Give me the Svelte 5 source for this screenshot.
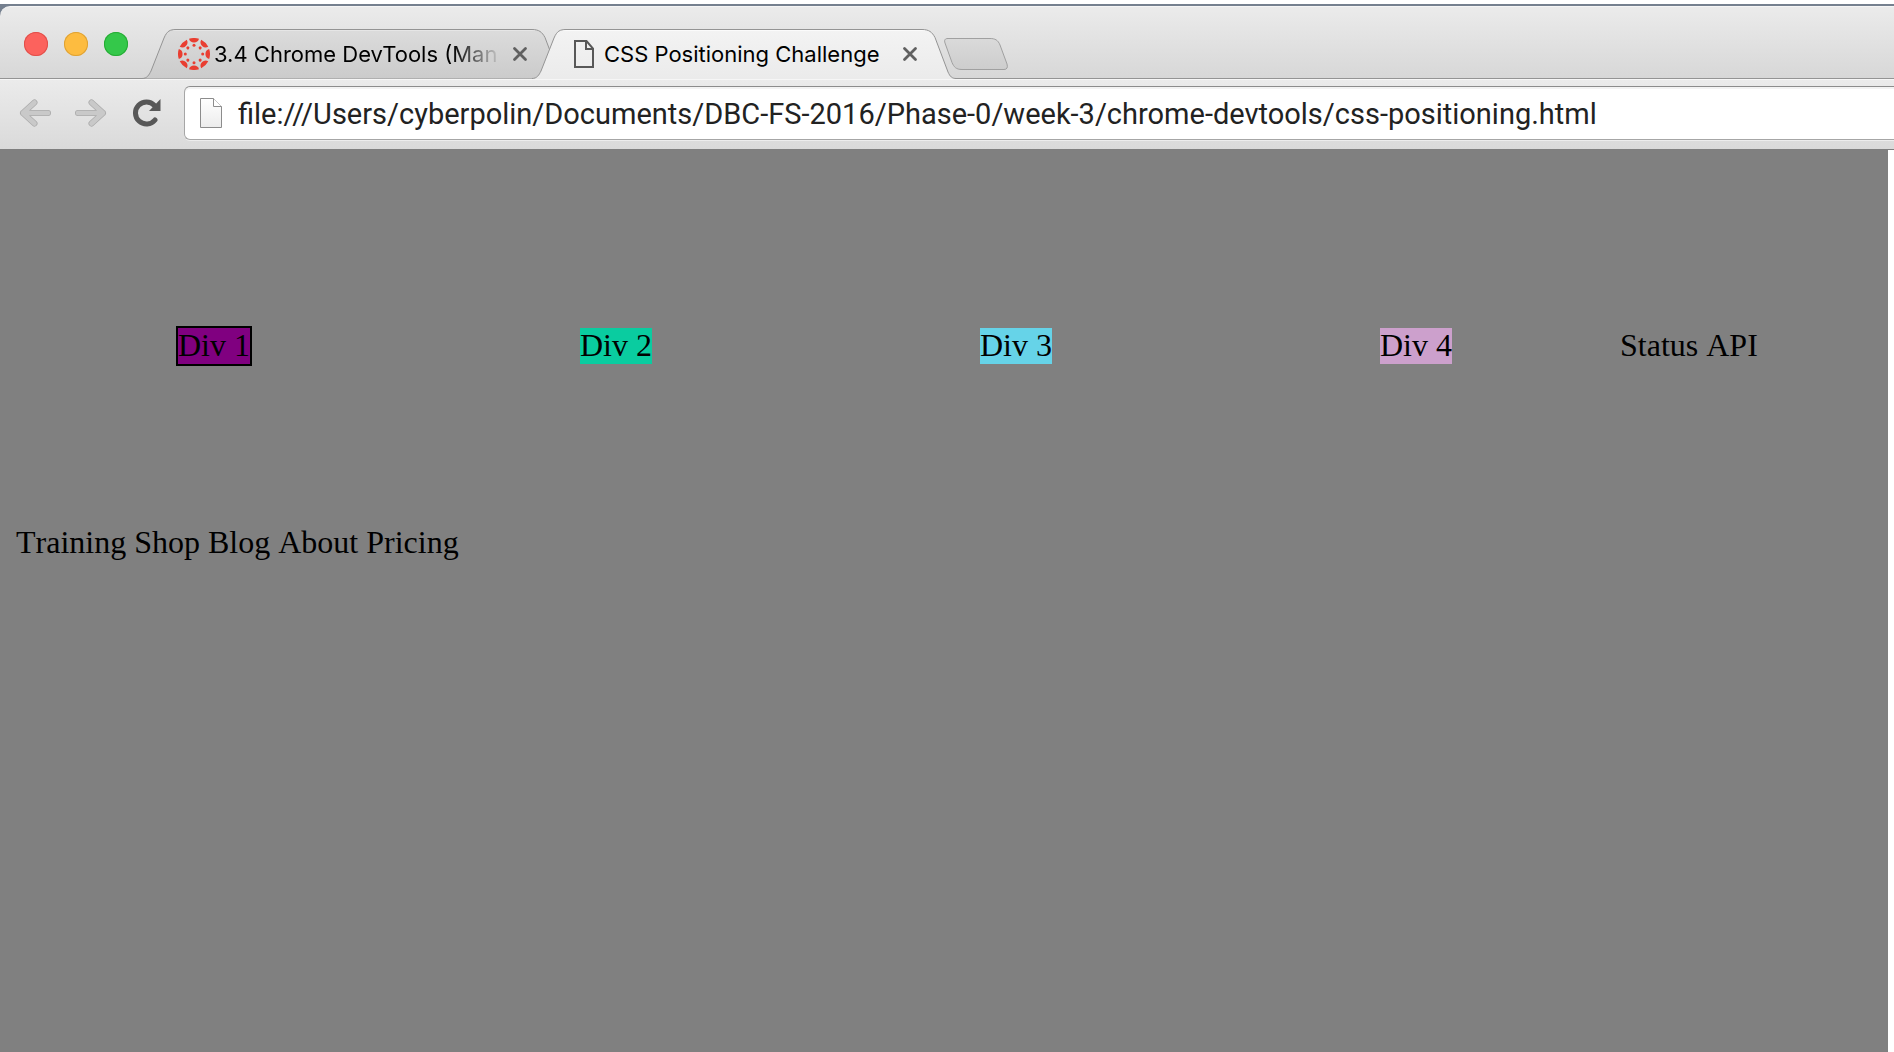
<script>
  let url = $state('file:///Users/cyberpolin/Documents/DBC-FS-2016/Phase-0/week-3/chrome-devtools/css-positioning.html');

  const tabs = [
    { title: '3.4 Chrome DevTools (Man', icon: 'ring', active: false },
    { title: 'CSS Positioning Challenge', icon: 'page', active: true }
  ];
  const shape = 'M0 49.5C5 49.5 7 46 9 42L22 9C25 2 28 .5 34 .5H390C397 .5 400 3 403 8.5L416 43C418 47.5 420 49.5 424 49.5';
  const lights = ['close', 'minimize', 'zoom'];
  const boxes = ['Div 1', 'Div 2', 'Div 3', 'Div 4'];
  const links = ['Status', 'API', 'Training', 'Shop', 'Blog', 'About', 'Pricing'];
  const spokes = [0, 45, 90, 135, 180, 225, 270, 315];
</script>

<div class="desktop">
  <div class="window">
    <header class="strip">
      <div class="lights">
        {#each lights as name}
          <button class="light {name}" aria-label={name}></button>
        {/each}
      </div>
      <div class="tabs">
        {#each tabs as tab}
          <div class="tab" class:active={tab.active}>
            <svg class="shape" viewBox="0 0 424 50" aria-hidden="true">
              <defs>
                <linearGradient id="fill-{tab.icon}" x1="0" y1="0" x2="0" y2="1">
                  <stop offset="0" stop-color={tab.active ? '#f3f3f3' : '#dcdcdc'} />
                  <stop offset="1" stop-color={tab.active ? '#ebebeb' : '#cbcbcb'} />
                </linearGradient>
              </defs>
              <path d={shape + (tab.active ? 'V50H0Z' : 'Z')} fill="url(#fill-{tab.icon})" />
              <path d="M31 1.5H393" stroke={tab.active ? '#fbfbfb' : '#e6e6e6'} />
              <path d={shape} fill="none" stroke="#949494" />
            </svg>
            <button class="label">
              {#if tab.icon === 'ring'}
                <svg class="ring" viewBox="-16 -16 32 32" aria-hidden="true">
                  {#each spokes as angle}
                    <g transform="rotate({angle})" fill="#e93e31">
                      <path d="M-5 -15.2A16 16 0 0 1 5 -15.2A5.2 5.2 0 0 1 -5 -15.2Z" />
                      <circle cy="-8.7" r="1.5" />
                    </g>
                  {/each}
                </svg>
              {:else}
                <svg class="page" viewBox="0 0 20 28" aria-hidden="true">
                  <path d="M1 1H12.500L19 8.500V27H1ZM12 1V9H19" fill="none" stroke="#585858" stroke-width="2" />
                </svg>
              {/if}
              <span class="title">{tab.title}</span>
            </button>
            <button class="shut" aria-label="Close tab">
              <svg viewBox="0 0 16 16" aria-hidden="true">
                <path d="M2.500 2.500L13.500 13.500M13.500 2.500L2.500 13.500" stroke="#606060" stroke-width="2.800" stroke-linecap="round" />
              </svg>
            </button>
          </div>
        {/each}
      </div>
      <button class="add" aria-label="New tab">
        <svg viewBox="0 0 66 34" aria-hidden="true">
          <defs>
            <linearGradient id="add-fill" x1="0" y1="0" x2="0" y2="1">
              <stop offset="0" stop-color="#dadada" />
              <stop offset="1" stop-color="#cdcdcd" />
            </linearGradient>
          </defs>
          <path d="M5 1.500H47C52 1.500 55 3 57 8L64 27C65 30.500 64 32.500 61 32.500H19C13 32.500 11 30 9 25.500L2 6C1 3 2 1.500 5 1.500Z" fill="url(#add-fill)" stroke="#a0a0a0" />
        </svg>
      </button>
    </header>

    <nav class="toolbar">
      <button class="tool" aria-label="Back">
        <svg viewBox="0 0 34 28" aria-hidden="true">
          <g fill="none" stroke-linecap="round" stroke-linejoin="round">
            <path d="M15.500 3.500L4 14L15.500 24.500M4 14H29" stroke="#ababab" stroke-width="6" />
            <path d="M15.500 3.500L4 14L15.500 24.500M4 14H29" stroke="#c9c9c9" stroke-width="4.500" />
          </g>
        </svg>
      </button>
      <button class="tool" aria-label="Forward">
        <svg viewBox="0 0 34 28" aria-hidden="true">
          <g fill="none" stroke-linecap="round" stroke-linejoin="round">
            <path d="M17.500 3.500L29 14L17.500 24.500M29 14H4" stroke="#ababab" stroke-width="6" />
            <path d="M17.500 3.500L29 14L17.500 24.500M29 14H4" stroke="#c9c9c9" stroke-width="4.500" />
          </g>
        </svg>
      </button>
      <button class="tool reload" aria-label="Reload">
        <svg viewBox="0 0 28 28" aria-hidden="true">
          <path d="M22 21A11 11 0 1 1 21.500 6.500" fill="none" stroke="#585858" stroke-width="5" stroke-linecap="round" />
          <path d="M27.500 0V12H16Z" fill="#585858" />
        </svg>
      </button>
      <label class="omnibox">
        <svg viewBox="0 0 24 30" aria-hidden="true">
          <defs>
            <linearGradient id="sheet" x1="0" y1="0" x2="0" y2="1">
              <stop offset="0" stop-color="#ffffff" />
              <stop offset="1" stop-color="#ececec" />
            </linearGradient>
          </defs>
          <path d="M1.500 .5H14.500L22.500 8.500V29.500H1.500Z" fill="url(#sheet)" stroke="#8c8c8c" />
          <path d="M14.500 .5V8.500H22.500" fill="#ffffff" stroke="#8c8c8c" />
        </svg>
        <input type="text" aria-label="Address" spellcheck="false" bind:value={url} />
      </label>
    </nav>

    <div class="viewport">
      <main>
        {#each boxes as box, i}
          <div class="box box{i + 1}">{box}</div>{' '}
        {/each}
        {#each links as link}
          <span>{link}</span>{' '}
        {/each}
      </main>
      <div class="track"></div>
    </div>
  </div>
</div>

<style>
  :global(body) {
    margin: 0;
    background: #ffffff;
  }
  .desktop {
    min-height: 100vh;
    box-sizing: border-box;
    padding-top: 4px;
    display: flex;
    flex-direction: column;
    overflow: hidden;
    font-family: Inter, 'Liberation Sans', sans-serif;
  }
  button {
    border: 0;
    padding: 0;
    background: none;
    font: inherit;
    color: inherit;
  }
  svg {
    display: block;
    flex: none;
  }
  .window {
    flex: 1;
    display: flex;
    flex-direction: column;
    background: #75808f;
    padding-top: 2px;
  }
  .strip {
    height: 73px;
    box-sizing: border-box;
    display: flex;
    align-items: flex-end;
    border-top-left-radius: 10px;
    border-top: 1px solid #f5f5f5;
    background: linear-gradient(#ebebeb, #d7d7d7);
    box-shadow: inset 0 -1px #949494;
  }
  .lights {
    display: flex;
    gap: 16px;
    padding: 0 14px 23px 24px;
  }
  .light {
    width: 24px;
    height: 24px;
    border-radius: 50%;
  }
  .close {
    background: #fc625d;
    box-shadow: inset 0 0 0 1px #e0504b;
  }
  .minimize {
    background: #fdbc40;
    box-shadow: inset 0 0 0 1px #dea236;
  }
  .zoom {
    background: #34c84a;
    box-shadow: inset 0 0 0 1px #27ab35;
  }
  .tabs {
    display: flex;
  }
  .tab {
    position: relative;
    width: 424px;
    height: 50px;
    box-sizing: border-box;
    display: flex;
    align-items: center;
    padding: 0 38px 0 36px;
  }
  .tab + .tab {
    margin-left: -34px;
  }
  .shape {
    position: absolute;
    inset: 0;
    width: 424px;
    height: 50px;
  }
  .label {
    position: relative;
    flex: 1;
    min-width: 0;
    display: flex;
    align-items: center;
    gap: 4px;
    font-size: 22px;
    line-height: 28px;
    color: #000000;
  }
  .ring {
    width: 32px;
    height: 32px;
  }
  .page {
    width: 20px;
    height: 28px;
    margin: 0 6px;
  }
  .title {
    flex: 1;
    min-width: 0;
    overflow: hidden;
    white-space: nowrap;
    text-align: left;
    mask-image: linear-gradient(to left, transparent, #000000 50px);
  }
  .active .title {
    mask-image: none;
  }
  .shut {
    position: relative;
    margin-left: 10px;
  }
  .shut svg {
    width: 16px;
    height: 16px;
  }
  .add {
    margin: 0 0 8px -13px;
    position: relative;
  }
  .add svg {
    width: 66px;
    height: 34px;
  }
  .toolbar {
    height: 71px;
    box-sizing: border-box;
    display: flex;
    align-items: center;
    gap: 21px;
    padding: 0 0 3px 19px;
    border-top: 1px solid #f6f6f6;
    border-bottom: 1px solid #7f7f7f;
    background: linear-gradient(#ebebeb, #dadada);
  }
  .tool svg {
    width: 34px;
    height: 28px;
  }
  .reload {
    margin: 0 2px 0 4px;
  }
  .reload svg {
    width: 28px;
  }
  .omnibox {
    flex: 1;
    height: 54px;
    box-sizing: border-box;
    display: flex;
    align-items: center;
    gap: 15px;
    padding-left: 14px;
    border: 1px solid #a6a6a6;
    border-top-color: #8c8c8c;
    border-right: 0;
    border-radius: 6px 0 0 6px;
    background: #ffffff;
    box-shadow: inset 0 2px #f3f3f3, 0 1px #ededed;
  }
  .omnibox svg {
    width: 24px;
    height: 30px;
  }
  input {
    flex: 1;
    min-width: 0;
    border: 0;
    padding: 2px 0 0;
    outline: 0;
    background: transparent;
    font: 29px/36px Roboto, 'Liberation Sans', sans-serif;
    color: #222222;
  }
  .viewport {
    flex: 1;
    display: flex;
  }
  main {
    flex: 1;
    padding: 16px;
    background: #808080;
    color: #000000;
    font: 32px/32px 'Liberation Serif', serif;
    font-kerning: none;
  }
  .track {
    width: 6px;
    background: #ffffff;
  }
  .box {
    display: inline-block;
    margin: 160px;
    padding: 1px 0 3px;
  }
  .box1 {
    border: 2px solid #000000;
    background: #800080;
  }
  .box2 {
    background: #0acca0;
  }
  .box3 {
    background: #66d3e8;
  }
  .box4 {
    background: #cca0cc;
  }
</style>
